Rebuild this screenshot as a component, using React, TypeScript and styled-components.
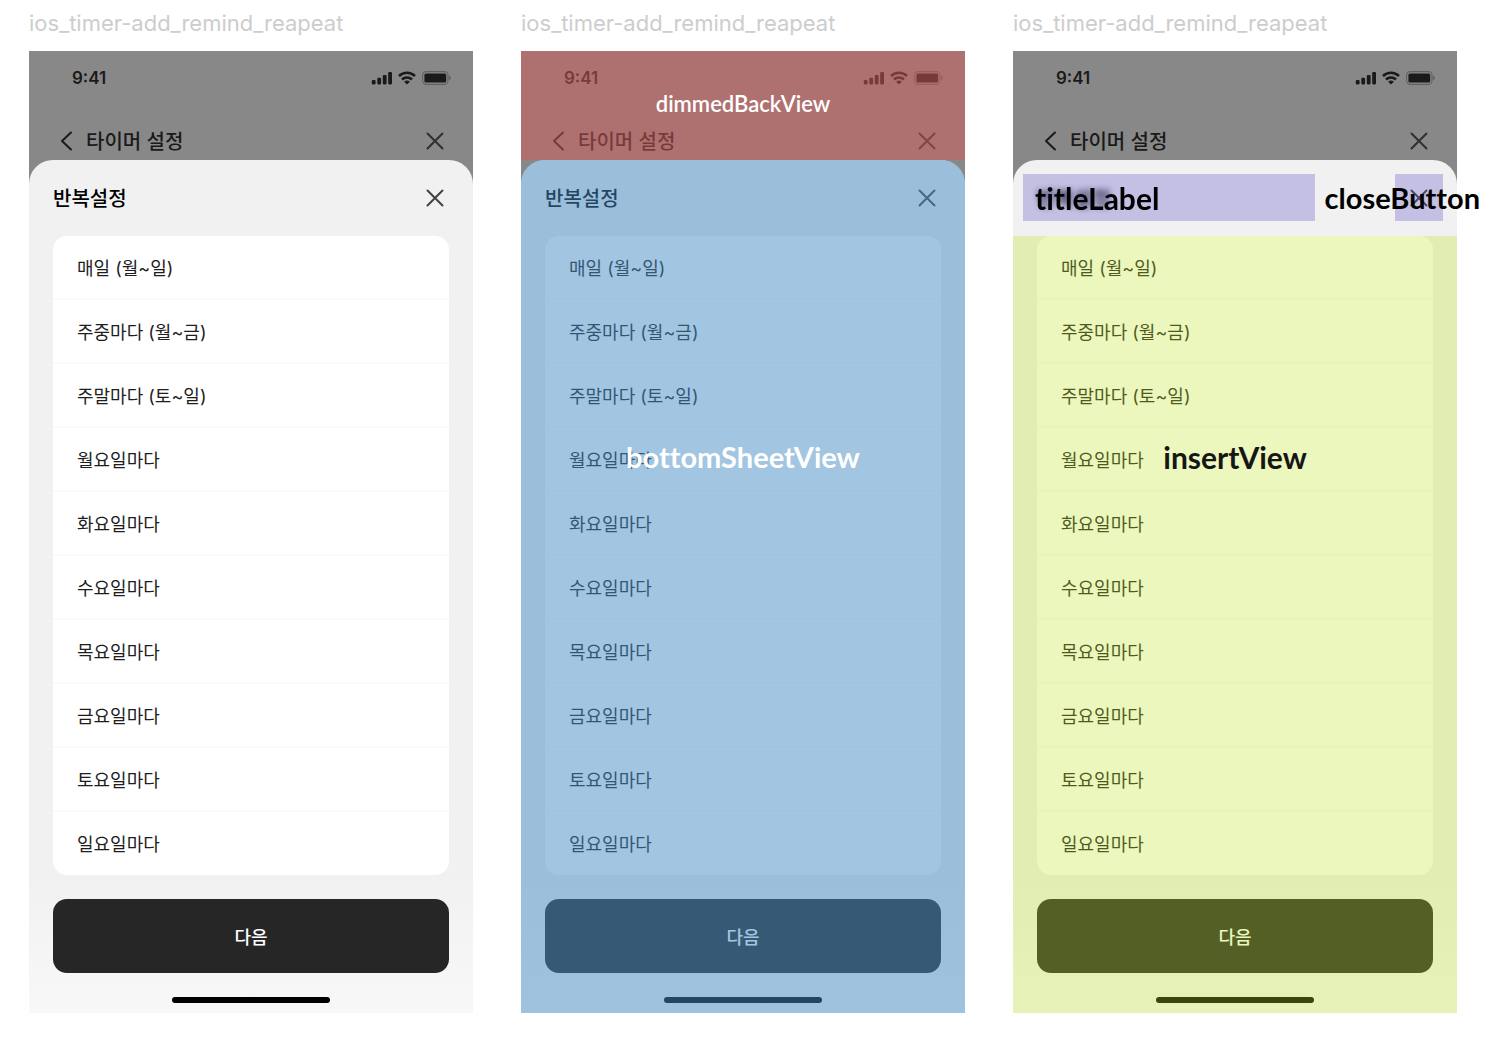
import React, { ReactNode } from 'react';
import styled, { createGlobalStyle } from 'styled-components';

const GlobalStyle = createGlobalStyle`
  *, *::before, *::after { box-sizing: border-box; }
  body { margin: 0; background: #ffffff; }
  button { font: inherit; color: inherit; border: 0; padding: 0; background: none; cursor: pointer; }
`;

const korean = `Inter, 'Noto Sans CJK KR', 'Noto Sans', sans-serif`;

const Board = styled.main`
  display: grid;
  grid-template-columns: repeat(3, minmax(0, 1fr));
  column-gap: 48px;
  padding: 8px 37px 35px 29px;
  font-family: ${korean};
`;

const Artboard = styled.section`
  display: flex;
  flex-direction: column;
`;

const ArtboardName = styled.h2`
  margin: 0 0 13px;
  font: 400 22px/30px Inter, sans-serif;
  color: #cdcdcd;
  white-space: nowrap;
`;

const Phone = styled.div`
  position: relative;
  display: flex;
  flex-direction: column;
`;

const Backdrop = styled.div`
  background: #888888;
  color: #1a1a1a;
  padding-bottom: 7px;
`;

const StatusBar = styled.div`
  display: flex;
  align-items: center;
  gap: 6px;
  height: 54px;
  padding: 0 22px 0 43px;
`;

const Clock = styled.span`
  margin-right: auto;
  font: 600 17px/24px Inter, sans-serif;
`;

const NavBar = styled.header`
  display: flex;
  align-items: center;
  gap: 7px;
  height: 72px;
  padding: 0 26px;
`;

const Heading = styled.h3`
  margin: 0 auto 0 0;
  padding-top: 2px;
  font-size: 20px;
  line-height: 30px;
  font-weight: 500;
`;

const IconButton = styled.button<{ $tone: string }>`
  display: flex;
  color: ${(p) => p.$tone};
`;

const Sheet = styled.div`
  position: relative;
  margin-top: -24px;
  padding: 0 24px 10px;
  border-radius: 24px 24px 0 0;
  background: linear-gradient(#f1f1f1 84%, #f8f8f8);
`;

const SheetHeader = styled.header`
  display: flex;
  align-items: center;
  height: 76px;
  padding-right: 2px;
  color: #000000;
`;

const Options = styled.ul`
  margin: 0;
  padding: 0 0 1px;
  list-style: none;
  overflow: hidden;
  border-radius: 14px;
  background: #ffffff;
`;

const Option = styled.li`
  border-bottom: 2px solid #fafafa;
  &:last-child { border-bottom: 0; }
`;

const OptionButton = styled.button`
  display: block;
  width: 100%;
  height: 62px;
  padding: 4px 24px 0;
  text-align: left;
  font-size: 18px;
  line-height: 28px;
  color: #1e1e1e;
`;

const NextButton = styled.button`
  display: block;
  width: 100%;
  height: 74px;
  margin-top: 24px;
  border-radius: 14px;
  background: #262626;
  color: #ffffff;
  font-size: 18px;
  font-weight: 500;
`;

const HomeIndicator = styled.div`
  width: 40%;
  height: 6px;
  margin: 24px auto 0;
  border-radius: 3px;
  background: #000000;
`;

const Mark = styled.div<{ $tint: string }>`
  position: absolute;
  display: flex;
  justify-content: center;
  background: ${(p) => p.$tint};
  pointer-events: none;
`;

const DimmedMark = styled(Mark)`
  inset: 0 0 auto;
  height: 109px;
  padding-bottom: 3px;
  align-items: center;
`;

const SheetMark = styled(Mark)`
  inset: 0;
  padding-top: 279px;
  border-radius: 24px 24px 0 0;
`;

const InsertMark = styled(Mark)`
  inset: 76px 0 0;
  padding-top: 203px;
`;

const TitleMark = styled(Mark)`
  top: 14px;
  left: 10px;
  right: 142px;
  height: 47px;
  padding-left: 12px;
  align-items: center;
  justify-content: flex-start;
  backdrop-filter: blur(3px);
`;

const CloseMark = styled(Mark)`
  top: 14px;
  right: 14px;
  width: 48px;
  height: 47px;
  align-items: center;
  justify-content: flex-end;

  & > span { margin-right: -37px; }
`;

const MarkText = styled.span<{ $size?: number; $weight?: number; $color?: string }>`
  font-family: Lato, sans-serif;
  font-size: ${(p) => p.$size ?? 30}px;
  line-height: 36px;
  font-weight: ${(p) => p.$weight ?? 700};
  font-variant-ligatures: none;
  color: ${(p) => p.$color ?? '#000000'};
  white-space: nowrap;
`;

const CloseIcon = () => (
  <svg width="24" height="24" viewBox="0 0 24 24" fill="none" stroke="currentColor" strokeWidth="2" strokeLinecap="round" aria-hidden="true">
    <path d="M4.5 4.5 19.5 19.5M19.5 4.5 4.5 19.5" />
  </svg>
);

const BackIcon = () => (
  <svg width="24" height="24" viewBox="0 0 24 24" fill="none" stroke="currentColor" strokeWidth="2" strokeLinecap="round" strokeLinejoin="round" aria-hidden="true">
    <path d="M16 3.5 7 12 16 20.5" />
  </svg>
);

const SignalIcon = () => (
  <svg width="21" height="14" viewBox="0 0 21 14" fill="currentColor" aria-hidden="true">
    <rect x="0.8" y="9" width="3.8" height="4.4" rx="1.1" />
    <rect x="6.3" y="6.8" width="3.8" height="6.6" rx="1.1" />
    <rect x="11.8" y="4" width="3.8" height="9.4" rx="1.1" />
    <rect x="17.2" y="1" width="3.8" height="12.4" rx="1.1" />
  </svg>
);

const WifiIcon = () => (
  <svg width="18" height="14" viewBox="0 0 18 14" fill="none" stroke="currentColor" strokeWidth="2.5" aria-hidden="true">
    <path d="M1 5a11.4 11.4 0 0 1 16 0" />
    <path d="M4 8.5a7.2 7.2 0 0 1 10 0" />
    <path d="M9 13.6 6.1 10.8a4.2 4.2 0 0 1 5.8 0z" fill="currentColor" stroke="none" />
  </svg>
);

const BatteryIcon = () => (
  <svg width="29" height="14" viewBox="0 0 29 14" aria-hidden="true">
    <rect x="0.6" y="0.6" width="25.4" height="12.8" rx="3.6" fill="none" stroke="currentColor" strokeOpacity="0.35" strokeWidth="1.1" />
    <rect x="2.4" y="2.4" width="21.8" height="9.2" rx="1.6" fill="currentColor" />
    <path d="M27.2 4.8v4.4c1-.4 1.5-1.2 1.5-2.2s-.5-1.8-1.5-2.2z" fill="currentColor" fillOpacity="0.4" />
  </svg>
);

const repeats = [
  '매일 (월~일)',
  '주중마다 (월~금)',
  '주말마다 (토~일)',
  '월요일마다',
  '화요일마다',
  '수요일마다',
  '목요일마다',
  '금요일마다',
  '토요일마다',
  '일요일마다',
];

function Screen({ backMarks, sheetMarks }: { backMarks?: ReactNode; sheetMarks?: ReactNode }) {
  return (
    <Artboard>
      <ArtboardName>ios_timer-add_remind_reapeat</ArtboardName>
      <Phone>
        <Backdrop>
          <StatusBar>
            <Clock>9:41</Clock>
            <SignalIcon />
            <WifiIcon />
            <BatteryIcon />
          </StatusBar>
          <NavBar>
            <IconButton $tone="#1a1a1a" aria-label="뒤로"><BackIcon /></IconButton>
            <Heading>타이머 설정</Heading>
            <IconButton $tone="#303030" aria-label="닫기"><CloseIcon /></IconButton>
          </NavBar>
        </Backdrop>
        {backMarks}
        <Sheet>
          <SheetHeader>
            <Heading>반복설정</Heading>
            <IconButton $tone="#444444" aria-label="닫기"><CloseIcon /></IconButton>
          </SheetHeader>
          <Options>
            {repeats.map((label) => (
              <Option key={label}>
                <OptionButton>{label}</OptionButton>
              </Option>
            ))}
          </Options>
          <NextButton>다음</NextButton>
          <HomeIndicator />
          {sheetMarks}
        </Sheet>
      </Phone>
    </Artboard>
  );
}

export default function App() {
  return (
    <>
      <GlobalStyle />
      <Board>
        <Screen />
        <Screen
          backMarks={
            <DimmedMark $tint="rgba(214, 90, 88, 0.5)">
              <MarkText $size={22} $weight={600} $color="#ffffff">dimmedBackView</MarkText>
            </DimmedMark>
          }
          sheetMarks={
            <SheetMark $tint="rgba(69, 140, 196, 0.5)">
              <MarkText $size={29} $color="#ffffff">bottomSheetView</MarkText>
            </SheetMark>
          }
        />
        <Screen
          sheetMarks={
            <>
              <InsertMark $tint="rgba(190, 230, 38, 0.3)">
                <MarkText $color="#161616">insertView</MarkText>
              </InsertMark>
              <TitleMark $tint="rgba(88, 81, 194, 0.3)">
                <MarkText>titleLabel</MarkText>
              </TitleMark>
              <CloseMark $tint="rgba(88, 81, 194, 0.3)">
                <MarkText $size={29}>closeButton</MarkText>
              </CloseMark>
            </>
          }
        />
      </Board>
    </>
  );
}
